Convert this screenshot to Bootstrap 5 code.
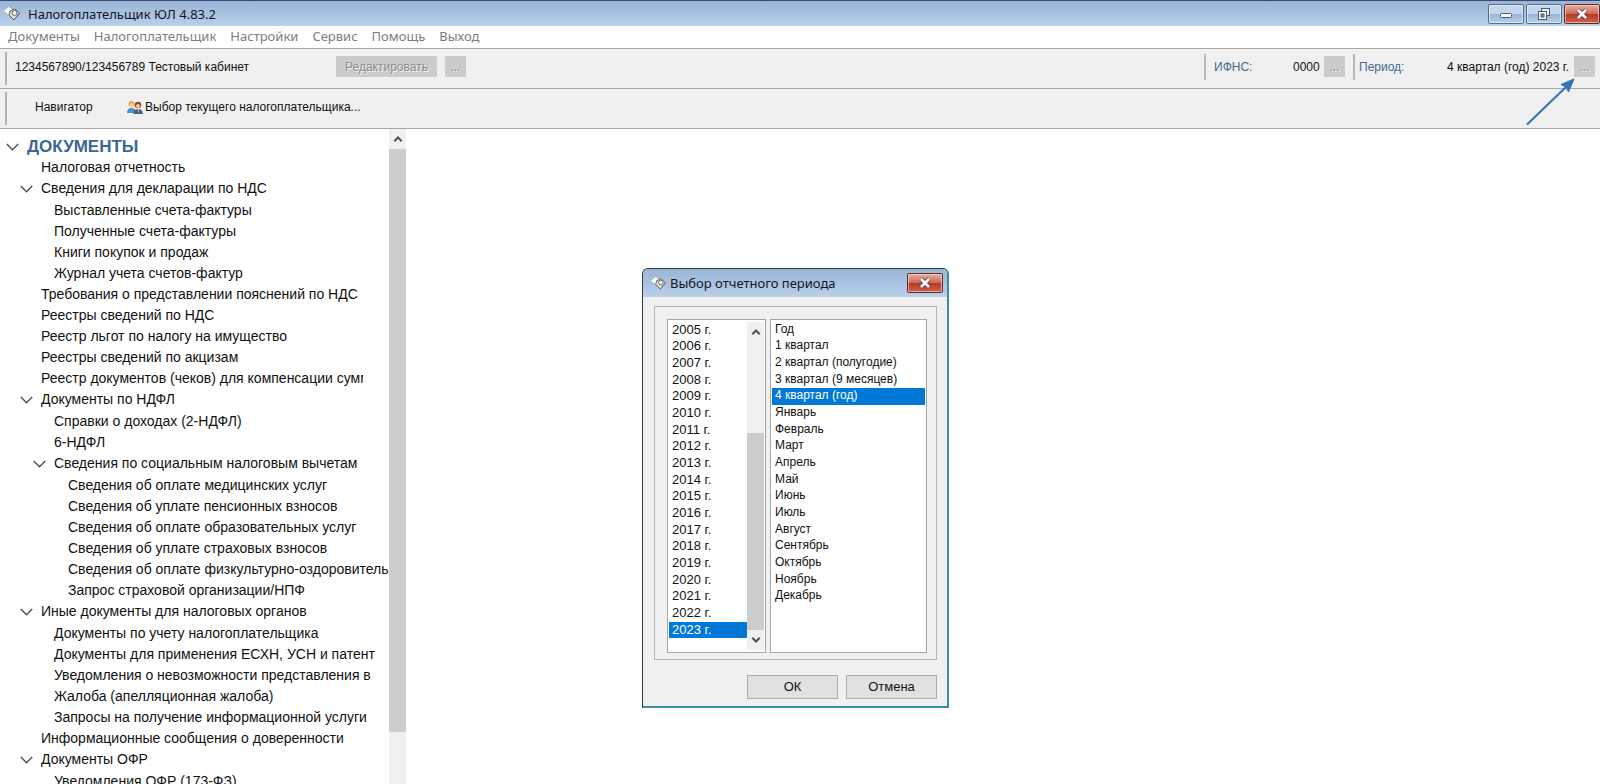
<!DOCTYPE html>
<html lang="ru">
<head>
<meta charset="utf-8">
<meta name="viewport" content="width=device-width, initial-scale=1">
<title>Налогоплательщик ЮЛ 4.83.2</title>
<link href="https://cdn.jsdelivr.net/npm/bootstrap@5.3.0/dist/css/bootstrap.min.css" rel="stylesheet">
<style>
  :root { --face: #f0f0f0; --thumb: #cdcdcd; --line: #a9a9a9; --accent: #0078d7; --label: #44698f; }
  body { font: 12px/16px "Liberation Sans", Arial, sans-serif; color: #111; background: #fff; height: 100vh; overflow: hidden; }
  a { color: inherit; text-decoration: none; }
  button { padding: 0; font: inherit; color: inherit; }

  .titlebar { height: 26px; background: linear-gradient(#99b4d6, #b9d0ea); border-top: 1px solid #3a4a68; font: 13px/18px "Noto Sans", sans-serif; color: #10151f; }
  .win-btns { gap: 2px; }
  .win-btn { width: 36px; height: 20px; border: 1px solid #55708f; border-radius: 2px; background: linear-gradient(#c3d6ec 0 48%, #98b6d8 52%, #b7cfe9); box-shadow: inset 0 0 0 1px #ffffff80; }
  .win-close { border-color: #5e2a2a; background: linear-gradient(#e2a093 0 10%, #cf6a58 48%, #b83a26 52%, #d0604b); }

  .menu { height: 22px; gap: 14px; font: 13px/20px "Noto Sans", sans-serif; color: #7d7d7d; padding-bottom: 2px; }
  .toolstrip { height: 40px; background: var(--face); border-top: 1px solid var(--line); padding: 3px 5px 3px 5px; white-space: nowrap; }
  .toolstrip.last { border-bottom: 1px solid var(--line); height: 41px; }
  .grip { width: 2px; background: #b4b4b4; }
  .rule { width: 2px; height: 26px; background: #b9b9b9; }
  .flat-btn { height: 21px; border: 0; background: #cbcbcb; color: #8b8b8b; text-shadow: 1px 1px #f4f4f4; }
  .dots { width: 21px; }
  .field-label { color: var(--label); }
  .pointer { right: 22px; top: 27px; z-index: 2; }

  .tree-pane { width: 406px; }
  .tree { font-size: 14px; line-height: 21px; padding-top: 7px; }
  .tree ul { padding-top: 1px; }
  .tree ul.root { padding-top: 0; }
  .tree li ul li .node { padding-left: 20px; }
  .tree li li ul li .node { padding-left: 33px; }
  .tree li li li ul li .node { padding-left: 47px; }
  .node { height: 21px; padding-left: 6px; white-space: nowrap; overflow: hidden; }
  .node a { margin-left: 21px; }
  .node button + a { margin-left: 8px; }
  .twisty { width: 13px; height: 21px; border: 0; background: none; line-height: 0; }
  .head { font: 700 17px/21px "Liberation Sans", Arial, sans-serif; color: #3c6594; }
  .cut { max-width: 322px; overflow: hidden; }
  .scroll { width: 17px; background: var(--face); line-height: 0; }
  .scroll button { border: 0; background: none; height: 20px; }
  .thumb { background: var(--thumb); }

  .dlg { left: 642px; top: 139px; width: 307px; font-size: 13px; border: 1px solid #2c3a42; border-right: 2px solid #3b8fa5; border-bottom: 2px solid #3b8fa5; border-radius: 6px 6px 0 0; background: var(--face); overflow: hidden; }
  .dlg-title { height: 28px; background: linear-gradient(#9ab5d6, #b9d0ea); font: 13px/18px "Noto Sans", sans-serif; color: #10151f; }
  .group { margin: 9px 10px 0 11px; padding: 12px 9px 6px 12px; border: 1px solid #b4b4b4; }
  .lb { border: 1px solid #a6a6a6; background: #fff; height: 334px; padding: 2px 1px; }
  .lb select { border: 0; border-radius: 0; outline: 0; padding: 0; margin: 0; width: 100%; height: 328px; background: #fff; font: 13px/17px "Liberation Sans", Arial, sans-serif; color: #111; overflow: hidden; }
  .lb .periods { font-size: 12px; }
  .lb option { display: block; height: 17px; min-height: 0; line-height: 17px; padding: 0 3px; }
  .lb option:nth-child(3n+1) { height: 16px; line-height: 16px; }
  .lb option:checked { background: linear-gradient(var(--accent), var(--accent)); color: #fff; -webkit-text-fill-color: #fff; }
  .dlg-actions { gap: 8px; padding: 15px 10px 7px; }
  .push { width: 91px; height: 24px; border: 1px solid #adadad; background: #e1e1e1; }
</style>
</head>
<body class="d-flex flex-column">

<svg class="d-none">
  <symbol id="logo" viewBox="0 0 16 16"><path d="M1 6 6 1l10 7-6 6z" fill="#8a9099"/><path d="M0 5 5 1l4 3-3 6z" fill="#fff"/><path d="M6 5l5-2 4.500 4-5.500 7-5-5z" fill="#dededb" stroke="#5b5f66"/><circle cx="10.500" cy="7" r="2.500" fill="#f4f2ea" stroke="#6e6a60"/></symbol>
  <symbol id="down" viewBox="0 0 13 8"><path d="M.8 1l5.700 5.700L12.200 1" fill="none" stroke="#44545f" stroke-width="1.400"/></symbol>
  <symbol id="sb-up" viewBox="0 0 10 8"><path d="M1.300 6.300 5 2.500l3.700 3.800" fill="none" stroke="#505050" stroke-width="2"/></symbol>
  <symbol id="sb-down" viewBox="0 0 10 8"><path d="M1.300 1.700 5 5.500l3.700-3.800" fill="none" stroke="#505050" stroke-width="2"/></symbol>
  <symbol id="cross" viewBox="0 0 14 12"><path d="M3 2l8 8M11 2l-8 8" stroke="#5b3333" stroke-width="4.500"/><path d="M3 2l8 8M11 2l-8 8" stroke="#fff" stroke-width="2.800"/></symbol>
</svg>

<header class="flex-shrink-0">
  <div class="titlebar d-flex align-items-center">
    <svg class="ms-1" width="16" height="16"><use href="#logo"/></svg>
    <span class="ms-2 me-auto">Налогоплательщик ЮЛ 4.83.2</span>
    <div class="win-btns d-flex">
      <button class="win-btn" aria-label="Свернуть"><svg class="d-block mx-auto" width="14" height="12"><rect x="1.500" y="5.500" width="11" height="4" rx="1" fill="#fff" stroke="#4d5a68"/></svg></button>
      <button class="win-btn" aria-label="Восстановить"><svg class="d-block mx-auto" width="14" height="14"><rect x="4.500" y="1.500" width="8" height="7" fill="#eef3f9" stroke="#4d5a68"/><rect x="1.500" y="4.500" width="8" height="8" fill="#fff" stroke="#4d5a68"/><rect x="4" y="7" width="3" height="3" fill="#7f93aa" stroke="#4d5a68"/></svg></button>
      <button class="win-btn win-close" aria-label="Закрыть"><svg class="d-block mx-auto" width="14" height="12"><use href="#cross"/></svg></button>
    </div>
  </div>
  <nav class="menu d-flex px-2 align-items-center">
    <a href="#">Документы</a><a href="#">Налогоплательщик</a><a href="#">Настройки</a><a href="#">Сервис</a><a href="#">Помощь</a><a href="#">Выход</a>
  </nav>

  <div class="toolstrip d-flex position-relative">
    <span class="grip"></span>
    <div class="d-flex flex-fill align-items-center pb-1">
      <span class="ms-2" style="width:321px">1234567890/123456789 Тестовый кабинет</span>
      <button class="flat-btn" style="width:101px" disabled>Редактировать</button>
      <button class="flat-btn dots ms-2" disabled>...</button>
      <span class="rule ms-auto"></span>
      <span class="field-label ms-1 ps-1" style="width:83px">ИФНС:</span>
      <span style="width:31px">0000</span>
      <button class="flat-btn dots" disabled>...</button>
      <span class="rule ms-2"></span>
      <span class="field-label ms-1" style="width:88px">Период:</span>
      <span style="width:127px">4 квартал (год) 2023 г.</span>
      <button class="flat-btn dots" disabled>...</button>
    </div>
    <svg class="pointer position-absolute" width="52" height="50"><path d="M1 48.500 40 11" stroke="#2f74b5" stroke-width="2"/><path d="M48 3 35 8.500l5 2.500 2.500 5z" fill="#2f74b5" stroke="#2f74b5"/></svg>
  </div>
  <div class="toolstrip last d-flex">
    <span class="grip"></span>
    <div class="d-flex align-items-center pb-1">
      <a href="#" style="width:96px" class="ms-4 ps-1">Навигатор</a>
      <a href="#" class="d-flex align-items-center">
        <svg width="18" height="14"><circle cx="4.500" cy="4" r="3" fill="#e9a23b"/><circle cx="4.500" cy="5" r="2" fill="#f7d3a6"/><path d="M0 13q0-5 4.500-5T9 13z" fill="#4f8fd0"/><circle cx="11" cy="5" r="3.200" fill="#7a4a2a"/><circle cx="11" cy="6" r="2" fill="#f2c79b"/><path d="M6.500 14q0-5 4.500-5t5 5z" fill="#4a5f86"/><path d="M10 9h2.500l-1.200 4z" fill="#e8a23a"/></svg>
        <span>Выбор текущего налогоплательщика...</span>
      </a>
    </div>
  </div>
</header>

<main class="d-flex flex-fill position-relative" style="min-height:0">
  <aside class="tree-pane d-flex flex-shrink-0">
    <nav class="tree flex-fill overflow-hidden">
      <ul class="root list-unstyled mb-0"><li>
        <div class="node head d-flex"><button class="twisty" aria-label="Свернуть"><svg width="13" height="8"><use href="#down"/></svg></button><a href="#">ДОКУМЕНТЫ</a></div>
        <ul class="root list-unstyled">
          <li><div class="node d-flex"><a href="#">Налоговая отчетность</a></div></li>
          <li><div class="node d-flex"><button class="twisty" aria-label="Свернуть"><svg width="13" height="8"><use href="#down"/></svg></button><a href="#">Сведения для декларации по НДС</a></div>
            <ul class="list-unstyled">
              <li><div class="node d-flex"><a href="#">Выставленные счета-фактуры</a></div></li>
              <li><div class="node d-flex"><a href="#">Полученные счета-фактуры</a></div></li>
              <li><div class="node d-flex"><a href="#">Книги покупок и продаж</a></div></li>
              <li><div class="node d-flex"><a href="#">Журнал учета счетов-фактур</a></div></li>
            </ul></li>
          <li><div class="node d-flex"><a href="#">Требования о представлении пояснений по НДС</a></div></li>
          <li><div class="node d-flex"><a href="#">Реестры сведений по НДС</a></div></li>
          <li><div class="node d-flex"><a href="#">Реестр льгот по налогу на имущество</a></div></li>
          <li><div class="node d-flex"><a href="#">Реестры сведений по акцизам</a></div></li>
          <li><div class="node d-flex"><a href="#" class="cut">Реестр документов (чеков) для компенсации сумм</a></div></li>
          <li><div class="node d-flex"><button class="twisty" aria-label="Свернуть"><svg width="13" height="8"><use href="#down"/></svg></button><a href="#">Документы по НДФЛ</a></div>
            <ul class="list-unstyled">
              <li><div class="node d-flex"><a href="#">Справки о доходах (2-НДФЛ)</a></div></li>
              <li><div class="node d-flex"><a href="#">6-НДФЛ</a></div></li>
              <li><div class="node d-flex"><button class="twisty" aria-label="Свернуть"><svg width="13" height="8"><use href="#down"/></svg></button><a href="#">Сведения по социальным налоговым вычетам</a></div>
                <ul class="list-unstyled">
                  <li><div class="node d-flex"><a href="#">Сведения об оплате медицинских услуг</a></div></li>
                  <li><div class="node d-flex"><a href="#">Сведения об уплате пенсионных взносов</a></div></li>
                  <li><div class="node d-flex"><a href="#">Сведения об оплате образовательных услуг</a></div></li>
                  <li><div class="node d-flex"><a href="#">Сведения об уплате страховых взносов</a></div></li>
                  <li><div class="node d-flex"><a href="#">Сведения об оплате физкультурно-оздоровитель</a></div></li>
                  <li><div class="node d-flex"><a href="#">Запрос страховой организации/НПФ</a></div></li>
                </ul></li>
            </ul></li>
          <li><div class="node d-flex"><button class="twisty" aria-label="Свернуть"><svg width="13" height="8"><use href="#down"/></svg></button><a href="#">Иные документы для налоговых органов</a></div>
            <ul class="list-unstyled">
              <li><div class="node d-flex"><a href="#">Документы по учету налогоплательщика</a></div></li>
              <li><div class="node d-flex"><a href="#">Документы для применения ЕСХН, УСН и патент</a></div></li>
              <li><div class="node d-flex"><a href="#">Уведомления о невозможности представления в</a></div></li>
              <li><div class="node d-flex"><a href="#">Жалоба (апелляционная жалоба)</a></div></li>
              <li><div class="node d-flex"><a href="#">Запросы на получение информационной услуги</a></div></li>
            </ul></li>
          <li><div class="node d-flex"><a href="#">Информационные сообщения о доверенности</a></div></li>
          <li><div class="node d-flex"><button class="twisty" aria-label="Свернуть"><svg width="13" height="8"><use href="#down"/></svg></button><a href="#">Документы ОФР</a></div>
            <ul class="list-unstyled">
              <li><div class="node d-flex"><a href="#">Уведомления ОФР (173-ФЗ)</a></div></li>
            </ul></li>
        </ul>
      </li></ul>
    </nav>
    <div class="scroll d-flex flex-column flex-shrink-0">
      <button aria-label="Вверх"><svg width="10" height="8"><use href="#sb-up"/></svg></button>
      <div class="thumb" style="height:89%"></div>
    </div>
  </aside>

  <section class="dlg position-absolute" role="dialog" aria-labelledby="dlgTitle">
    <div class="dlg-title d-flex align-items-center ps-2 pe-1">
      <svg width="15" height="15"><use href="#logo"/></svg>
      <span id="dlgTitle" class="ms-1 me-auto">Выбор отчетного периода</span>
      <button class="win-btn win-close" aria-label="Закрыть"><svg class="d-block mx-auto" width="14" height="12"><use href="#cross"/></svg></button>
    </div>
    <div class="group d-flex gap-1">
      <div class="lb d-flex" style="width:99px">
        <select size="19" aria-label="Год">
          <option>2005 г.</option><option>2006 г.</option><option>2007 г.</option><option>2008 г.</option><option>2009 г.</option><option>2010 г.</option><option>2011 г.</option><option>2012 г.</option><option>2013 г.</option><option>2014 г.</option><option>2015 г.</option><option>2016 г.</option><option>2017 г.</option><option>2018 г.</option><option>2019 г.</option><option>2020 г.</option><option>2021 г.</option><option>2022 г.</option><option selected>2023 г.</option>
        </select>
        <div class="scroll d-flex flex-column flex-shrink-0">
          <button aria-label="Вверх"><svg width="10" height="8"><use href="#sb-up"/></svg></button>
          <div class="thumb mt-auto" style="height:60%"></div>
          <button aria-label="Вниз"><svg width="10" height="8"><use href="#sb-down"/></svg></button>
        </div>
      </div>
      <div class="lb flex-fill">
        <select class="periods" size="17" aria-label="Период">
          <option>Год</option><option>1 квартал</option><option>2 квартал (полугодие)</option><option>3 квартал (9 месяцев)</option><option selected>4 квартал (год)</option><option>Январь</option><option>Февраль</option><option>Март</option><option>Апрель</option><option>Май</option><option>Июнь</option><option>Июль</option><option>Август</option><option>Сентябрь</option><option>Октябрь</option><option>Ноябрь</option><option>Декабрь</option>
        </select>
      </div>
    </div>
    <div class="dlg-actions d-flex justify-content-end">
      <button class="push">ОК</button>
      <button class="push">Отмена</button>
    </div>
  </section>
</main>
<script src="https://cdn.jsdelivr.net/npm/bootstrap@5.3.0/dist/js/bootstrap.bundle.min.js"></script>
</body>
</html>
